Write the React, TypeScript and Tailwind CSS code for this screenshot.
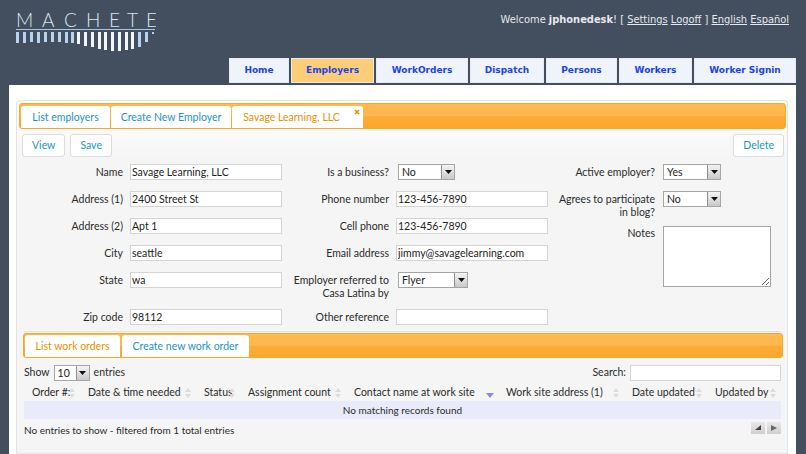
const navItems = [
  { label: "Home", width: "w-[60px]" },
  { label: "Employers", width: "w-[83px]", active: true },
  { label: "WorkOrders", width: "w-[92px]" },
  { label: "Dispatch", width: "w-[74px]" },
  { label: "Persons", width: "w-[71px]" },
  { label: "Workers", width: "w-[73px]" },
  { label: "Worker Signin", width: "w-[102px]" },
];

const columns = [
  { label: "Order #:", width: "w-[56px]" },
  { label: "Date & time needed", width: "w-[116px]" },
  { label: "Status", width: "w-[44px]" },
  { label: "Assignment count", width: "w-[106px]" },
  { label: "Contact name at work site", width: "w-[152px]", sorted: true },
  { label: "Work site address (1)", width: "w-[126px]" },
  { label: "Date updated", width: "w-[83px]" },
  { label: "Updated by", width: "w-[74px]" },
];

// x, bottom, width of each logo bar
const bars = [
  [16, 43, 3], [23, 43, 3], [30, 42, 3], [37, 43, 3], [44, 42, 3], [51, 42, 3], [58, 42, 3], [65, 43, 3],
  [71, 43, 3], [77, 44, 3], [84, 46, 3], [91, 47, 3], [98, 49, 3], [104, 50, 3], [111, 51, 3], [118, 51, 3],
  [125, 50, 3], [131, 49, 3], [138, 47, 3], [145, 42, 3], [152, 34, 2],
];

const barStyle = "bg-[linear-gradient(#feb94f_0%,#feb84d_48%,#fcab35_54%,#fba72c_100%)]";

const Logo = () => (
  <svg width="156" height="54" viewBox="0 0 156 54" className="block">
    <text
      x="16 42 64 86 109 127 146"
      y="27"
      fontFamily="Lato, sans-serif"
      fontWeight="300"
      fontSize="19"
      fill="#dce6f2"
    >
      MACHETE
    </text>
    <rect x="16" y="29" width="139" height="1" fill="#a9c4e4" />
    {bars.map(([x, y, w], i) => (
      <rect
        key={i}
        x={x}
        y={32}
        width={w}
        height={y - 32}
        fill={i > 8 && i < 18 ? "#f2f6fb" : "#b7d3ef"}
      />
    ))}
  </svg>
);

const TextInput = ({ value, width = "w-[152px]" }: { value: string; width?: string }) => (
  <input
    readOnly
    value={value}
    className={`${width} h-[16px] border border-[#d4d4d4] bg-white px-[1px] text-[10.5px] text-[#222] outline-none`}
  />
);

const SelectBox = ({ value, width }: { value: string; width: string }) => (
  <div className={`${width} flex h-[16px] items-stretch border border-[#a5a5a5] bg-white text-[10.5px] text-[#222]`}>
    <span className="flex-1 pl-[3px] leading-[14px]">{value}</span>
    <span className="flex w-[13px] items-center justify-center border-l border-[#8f8f8f] bg-gradient-to-b from-[#f4f4f4] to-[#c9c9c9]">
      <svg width="7" height="4" viewBox="0 0 7 4">
        <path d="M0 0H7L3.5 4Z" fill="#111" />
      </svg>
    </span>
  </div>
);

const Label = ({ children, className = "mt-[2px]" }: { children: React.ReactNode; className?: string }) => (
  <label className={`whitespace-nowrap text-right text-[10.5px] leading-[13px] text-[#2b2b2b] ${className}`}>
    {children}
  </label>
);

const ActionButton = ({ children }: { children: React.ReactNode }) => (
  <button className="h-[23px] rounded-[3px] border border-[#dcdcdc] bg-white px-[9px] text-[10.5px] text-[#1c94c4]">
    {children}
  </button>
);

const Tab = ({
  children,
  active,
  width,
  className = "",
}: {
  children: React.ReactNode;
  active?: boolean;
  width: string;
  className?: string;
}) => (
  <div
    className={`${width} ${className} relative flex h-[22px] items-center justify-center rounded-t-[3px] bg-white pt-[1px] text-[10.5px] ${
      active ? "text-[#eb8f00]" : "text-[#1c94c4]"
    }`}
  >
    {children}
  </div>
);

const SortIcon = ({ sorted }: { sorted?: boolean }) =>
  sorted ? (
    <svg width="8" height="5" viewBox="0 0 8 5" className="absolute right-[4px] top-[9px]">
      <path d="M0 0H8L4 5Z" fill="#8a8ae8" />
    </svg>
  ) : (
    <svg width="6" height="10" viewBox="0 0 6 10" className="absolute right-[5px] top-[4px]">
      <path d="M3 0L6 4H0ZM3 10L0 6H6Z" fill="#dcdcdc" />
    </svg>
  );

const App = () => {
  return (
    <div className="flex h-screen flex-col overflow-hidden bg-[#434e5e] font-['Lato',sans-serif]">
      <header className="relative h-[85px] shrink-0">
        <Logo />
        <div className="absolute right-[17px] top-[13px] whitespace-nowrap font-['DejaVu_Sans',sans-serif] text-[9.9px] leading-[14px] text-[#e6e9ed]">
          Welcome <b>jphonedesk</b>! [ <u>Settings</u> <u>Logoff</u> ] <u>English</u> <u>Español</u>
        </div>
        <nav className="absolute left-[229px] top-[58px] flex gap-[2px]">
          {navItems.map((item) => (
            <div
              key={item.label}
              className={`${item.width} flex h-[25px] items-center justify-center border border-[#e8ecf2] font-['DejaVu_Sans',sans-serif] text-[9px] font-bold text-[#1a44e6] ${
                item.active ? "bg-[#ffcd78]" : "bg-[#eff3fb]"
              }`}
            >
              {item.label}
            </div>
          ))}
        </nav>
      </header>

      <main className="ml-[9px] mr-[10px] flex-1 bg-white pl-[7px] pr-[8px] pt-[15px]">
        <section className="h-full rounded-t-[4px] border border-[#e2e2e2] bg-gradient-to-b from-white to-[#f5f5f5] to-[60px] pl-[2px] pr-[1px] pt-[2px]">
          <div className={`flex h-[26px] items-end gap-[1px] rounded-[3px] border border-[#f6a828] pl-[1px] ${barStyle}`}>
            <Tab width="w-[89px]">List employers</Tab>
            <Tab width="w-[120px]">Create New Employer</Tab>
            <Tab width="w-[131px]" className="pr-[12px]" active>
              Savage Learning, LLC
              <svg width="6" height="6" viewBox="0 0 6 6" className="absolute right-[3px] top-[3px]">
                <path d="M1 1L5 5M5 1L1 5" stroke="#eb8f00" strokeWidth="1.6" />
              </svg>
            </Tab>
          </div>

          <div className="ml-[3px] mr-[2px] mt-[5px] flex justify-between">
            <div className="flex gap-[5px]">
              <ActionButton>View</ActionButton>
              <ActionButton>Save</ActionButton>
            </div>
            <ActionButton>Delete</ActionButton>
          </div>

          <div className="ml-[3px] mt-[7px] grid grid-cols-[101px_152px_100px_152px_100px_auto] grid-rows-[27px_27px_27px_27px_37px_17px] items-start gap-x-[7px]">
            <Label>Name</Label>
            <TextInput value="Savage Learning, LLC" />
            <Label>Is a business?</Label>
            <div className="pl-[2px]"><SelectBox value="No" width="w-[57px]" /></div>
            <Label>Active employer?</Label>
            <div className="pl-[1px]"><SelectBox value="Yes" width="w-[58px]" /></div>

            <Label>Address (1)</Label>
            <TextInput value="2400 Street St" />
            <Label>Phone number</Label>
            <TextInput value="123-456-7890" />
            <Label>Agrees to participate<br />in blog?</Label>
            <div className="pl-[1px]"><SelectBox value="No" width="w-[58px]" /></div>

            <Label>Address (2)</Label>
            <TextInput value="Apt 1" />
            <Label>Cell phone</Label>
            <TextInput value="123-456-7890" />
            <Label className="row-span-3 mt-[9px]">Notes</Label>
            <div className="row-span-3 pl-[1px] pt-[8px]">
              <textarea
                readOnly
                className="block h-[61px] w-[108px] border border-[#a5a5a5] bg-white outline-none"
              />
            </div>

            <Label>City</Label>
            <TextInput value="seattle" />
            <Label>Email address</Label>
            <TextInput value="jimmy@savagelearning.com" />

            <Label>State</Label>
            <TextInput value="wa" />
            <Label>Employer referred to<br />Casa Latina by</Label>
            <div className="pl-[2px]"><SelectBox value="Flyer" width="w-[70px]" /></div>

            <Label>Zip code</Label>
            <TextInput value="98112" />
            <Label>Other reference</Label>
            <TextInput value="" />
          </div>

          <div className="ml-[4px] mr-[3px] mt-[5px] rounded-t-[3px] border-t border-[#e2e2e2] pt-[1px]">
            <div className={`flex h-[25px] items-end gap-[2px] rounded-[3px] border border-[#f6a828] pl-[1px] ${barStyle}`}>
              <Tab width="w-[95px]" active>List work orders</Tab>
              <Tab width="w-[127px]">Create new work order</Tab>
            </div>

            <div className="mt-[6px] flex h-[17px] items-center justify-between text-[10.5px] text-[#2b2b2b]">
              <div className="flex items-center gap-[4px] pl-[1px]">
                Show <SelectBox value="10" width="w-[36px]" /> entries
              </div>
              <div className="flex items-center gap-[4px] pr-[2px]">
                Search: <TextInput value="" width="w-[151px]" />
              </div>
            </div>

            <table className="ml-[1px] mt-[3px] w-[757px] table-fixed border-collapse text-[10.5px] text-[#2b2b2b]">
              <thead>
                <tr className="h-[17px]">
                  {columns.map((col) => (
                    <th key={col.label} className={`${col.width} relative whitespace-nowrap pl-[8px] text-left font-normal`}>
                      {col.label}
                      <SortIcon sorted={col.sorted} />
                    </th>
                  ))}
                </tr>
              </thead>
              <tbody>
                <tr className="h-[18px] bg-[#e9ebfb]">
                  <td colSpan={8} className="text-center text-[10px]">No matching records found</td>
                </tr>
              </tbody>
            </table>

            <div className="mt-[3px] flex items-start justify-between pl-[1px] pr-[2px] text-[10px] text-[#2b2b2b]">
              <span className="mt-[1px]">No entries to show - filtered from 1 total entries</span>
              <div className="flex gap-[2px]">
                <span className="flex h-[12px] w-[14px] items-center justify-center bg-gradient-to-b from-[#e8e8e8] to-[#cfcfcf]">
                  <svg width="6" height="6" viewBox="0 0 6 6"><path d="M6 0V5H0Z" fill="#444" /></svg>
                </span>
                <span className="flex h-[12px] w-[14px] items-center justify-center bg-gradient-to-b from-[#e8e8e8] to-[#cfcfcf]">
                  <svg width="6" height="6" viewBox="0 0 6 6"><path d="M0 0L6 3L0 6Z" fill="#666" /></svg>
                </span>
              </div>
            </div>
          </div>
        </section>
      </main>
    </div>
  );
};

export default App;
